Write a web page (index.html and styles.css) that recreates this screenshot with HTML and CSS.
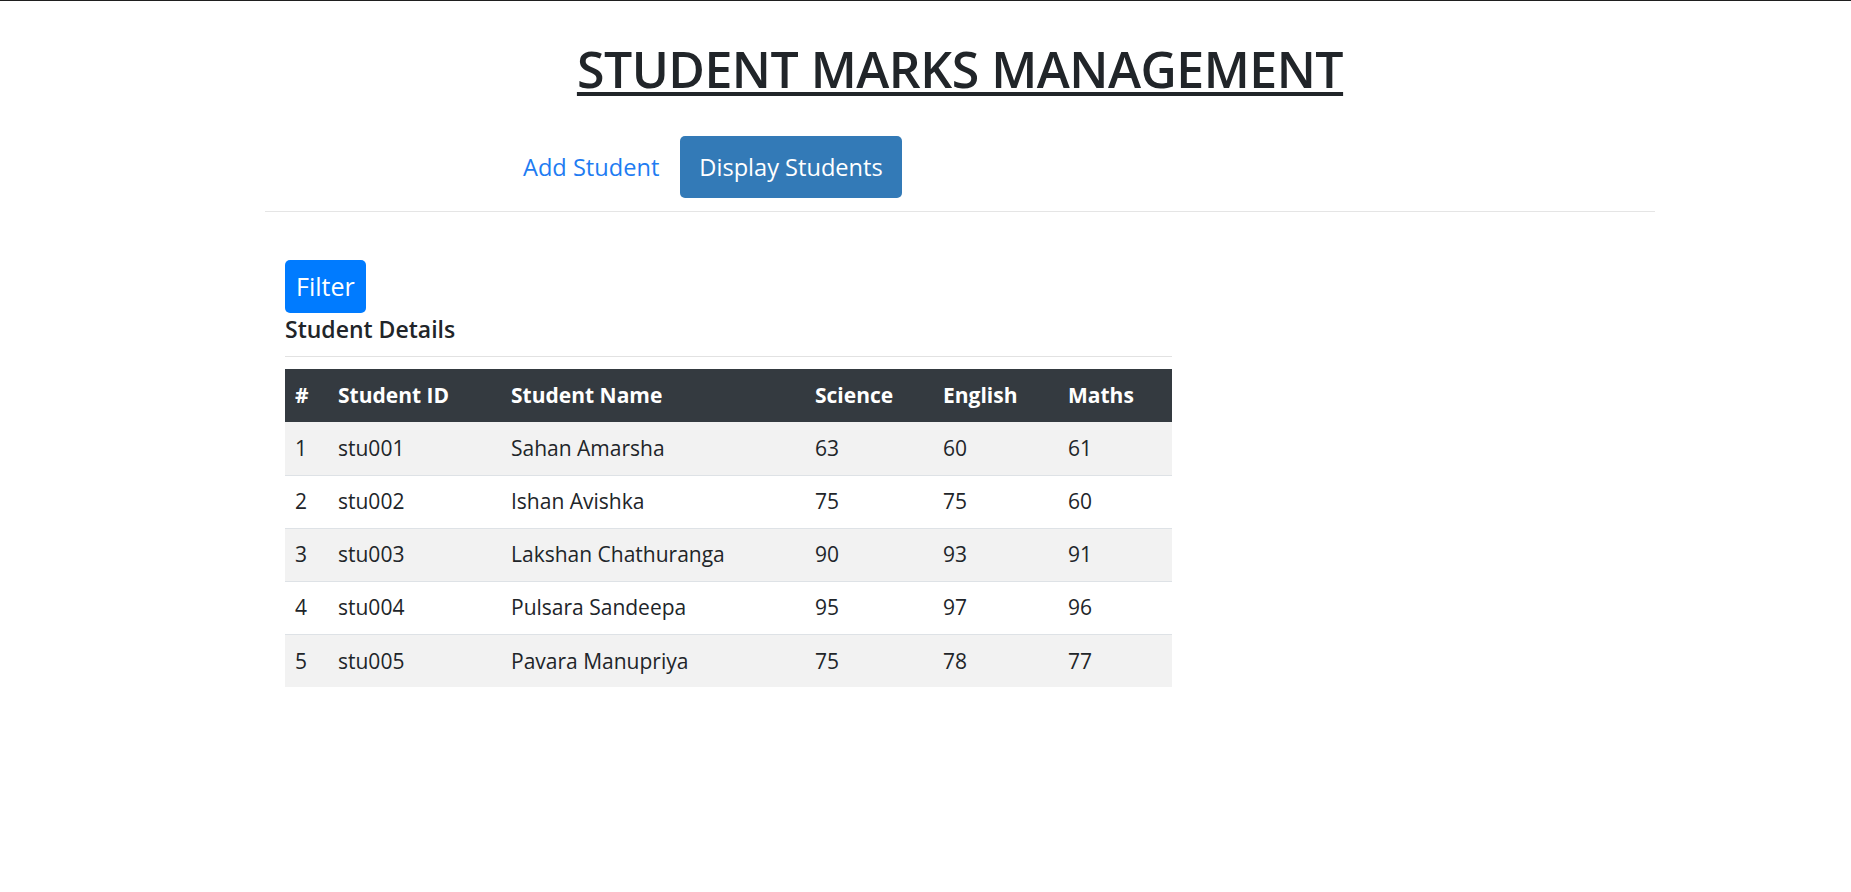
FILE: index.html
```html
<!DOCTYPE html>
<html lang="en">
<head>
<meta charset="utf-8">
<title>Student Marks Management</title>
<link rel="stylesheet" href="styles.css">
</head>
<body>
<div class="page">
  <header class="masthead">
    <h1 class="title">STUDENT MARKS MANAGEMENT</h1>
    <nav class="nav">
      <a class="nav-link" href="#">Add Student</a>
      <a class="nav-link active" href="#">Display Students</a>
    </nav>
  </header>
  <main class="content">
    <button class="btn-filter" type="button">Filter</button>
    <h5 class="section-title">Student Details</h5>
    <div class="divider"></div>
    <table class="marks">
      <thead>
        <tr>
          <th class="c-num">#</th>
          <th class="c-id">Student ID</th>
          <th class="c-name">Student Name</th>
          <th class="c-sci">Science</th>
          <th class="c-eng">English</th>
          <th class="c-math">Maths</th>
        </tr>
      </thead>
      <tbody>
        <tr><td>1</td><td>stu001</td><td>Sahan Amarsha</td><td>63</td><td>60</td><td>61</td></tr>
        <tr><td>2</td><td>stu002</td><td>Ishan Avishka</td><td>75</td><td>75</td><td>60</td></tr>
        <tr><td>3</td><td>stu003</td><td>Lakshan Chathuranga</td><td>90</td><td>93</td><td>91</td></tr>
        <tr><td>4</td><td>stu004</td><td>Pulsara Sandeepa</td><td>95</td><td>97</td><td>96</td></tr>
        <tr><td>5</td><td>stu005</td><td>Pavara Manupriya</td><td>75</td><td>78</td><td>77</td></tr>
      </tbody>
    </table>
  </main>
</div>
</body>
</html>
```

FILE: styles.css
```css
* { box-sizing: border-box; }

html, body {
  margin: 0;
  padding: 0;
  background: #ffffff;
}

body {
  border-top: 1px solid #1f1f1f;
  font-family: "Open Sans", "Noto Sans", sans-serif;
  color: #212529;
  font-size: 20px;
  line-height: 1.5;
}

.page {
  margin-left: 265px;
  width: 1390px;
}

.masthead {
  border-bottom: 1px solid #e5e5e5;
  padding-bottom: 13px;
}

.title {
  margin: 0;
  padding-top: 38px;
  text-align: center;
  font-size: 50px;
  font-weight: 600;
  line-height: 60px;
  letter-spacing: -0.5px;
  text-decoration: underline;
  text-decoration-thickness: 4px;
  text-underline-offset: 4px;
}

.nav {
  display: flex;
  gap: 2px;
  margin-top: 37px;
  padding-left: 239px;
}

.nav-link {
  display: block;
  height: 62px;
  padding: 0 19px;
  font-size: 23.6px;
  line-height: 62px;
  color: #1e7cf2;
  text-decoration: none;
  border-radius: 5px;
}

.nav-link.active {
  background: #337ab7;
  color: #ffffff;
}

.content {
  padding: 48px 20px 0;
}

.btn-filter {
  display: block;
  height: 53px;
  padding: 0 11px;
  border: none;
  border-radius: 5px;
  background: #007bff;
  color: #ffffff;
  font-family: inherit;
  font-size: 25px;
  line-height: 53px;
}

.section-title {
  margin: 0;
  font-size: 23px;
  font-weight: 600;
  line-height: 32px;
}

.divider {
  width: 887px;
  border-top: 1px solid #e2e2e2;
  margin-top: 11px;
}

.marks {
  width: 887px;
  margin-top: 12px;
  border-collapse: collapse;
  table-layout: fixed;
}

.marks th,
.marks td {
  height: 53px;
  padding: 1px 10px 0;
  text-align: left;
  vertical-align: middle;
  white-space: nowrap;
}

.marks th {
  background: #343a40;
  color: #ffffff;
  font-weight: 700;
  font-size: 21px;
  border: none;
}

.marks td {
  font-size: 21px;
  border-top: 1px solid #dee2e6;
}

.marks tbody tr:nth-child(odd) td {
  background: #f2f2f2;
}

.marks tbody tr:first-child td {
  border-top: none;
}

.c-num { width: 43px; }
.c-id { width: 173px; }
.c-name { width: 304px; }
.c-sci { width: 128px; }
.c-eng { width: 125px; }
.c-math { width: 114px; }
```
